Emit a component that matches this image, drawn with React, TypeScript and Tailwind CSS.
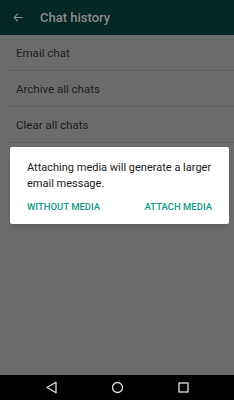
export default function App() {
  const items = ["Email chat", "Archive all chats", "Clear all chats"];
  return (
    <div className="relative flex h-[400px] w-[234px] flex-col bg-[#6b6b6b] font-['Roboto',sans-serif]">
      <div className="flex h-[35px] items-center bg-[#052723] pl-[12px]">
        <svg width="13" height="13" viewBox="0 0 24 24" className="text-[#8d8d8d]">
          <path d="M20 12H5M11 5l-7 7 7 7" fill="none" stroke="currentColor" strokeWidth="2" />
        </svg>
        <span className="ml-[15px] text-[13px] font-medium text-[#8c8c8c]">Chat history</span>
      </div>
      <div className="flex-1">
        {items.map((t) => (
          <div key={t} className="ml-[8px] flex h-[36px] items-center border-b border-[#606060] pl-[8px] pt-[2px] text-[11.5px] text-[#1c1c1c]">
            {t}
          </div>
        ))}
      </div>
      <div className="flex h-[25px] items-center justify-center gap-[53px] bg-black">
        <svg width="13" height="13" viewBox="0 0 13 13">
          <path d="M11 1.2L2 6.5l9 5.3z" fill="none" stroke="#e0e0e0" strokeWidth="1.3" strokeLinejoin="round" />
        </svg>
        <svg width="13" height="13" viewBox="0 0 13 13">
          <circle cx="6.5" cy="6.5" r="5" fill="none" stroke="#e0e0e0" strokeWidth="1.3" />
        </svg>
        <svg width="13" height="13" viewBox="0 0 13 13">
          <rect x="2" y="2" width="9" height="9" fill="none" stroke="#e0e0e0" strokeWidth="1.3" />
        </svg>
      </div>
      <div className="absolute left-[10px] top-[147px] w-[219px] rounded-[2px] bg-white px-[17px] pt-[13px] pb-[10px] shadow-md">
        <p className="text-[11px] leading-[16px] text-[#212121]">
          Attaching media will generate a larger email message.
        </p>
        <div className="mt-[8px] flex justify-between text-[9.5px] font-medium text-[#0f9a88]">
          <span>WITHOUT MEDIA</span>
          <span>ATTACH MEDIA</span>
        </div>
      </div>
    </div>
  );
}
